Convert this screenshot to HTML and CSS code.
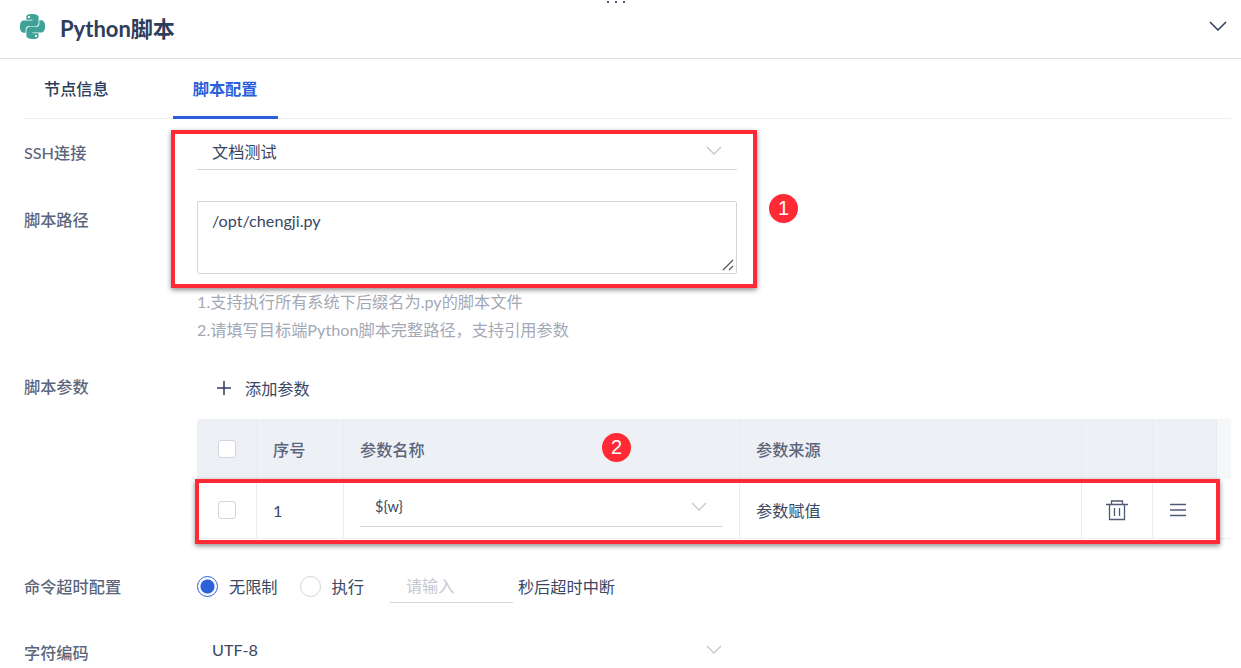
FILE: index.html
```html
<!DOCTYPE html>
<html lang="en">
<head>
    <meta charset="UTF-8">
    <title>Python脚本</title>
    <link rel="stylesheet" href="styles.css">
</head>
<body>
    <div class="panel">
        <div class="drag-dots"><span></span><span></span><span></span></div>
        <div class="header">
            <svg class="py-logo" viewBox="0 0 24 24" width="25" height="25">
                <path fill="#3fa296" fill-rule="evenodd" d="M14.25.18l.9.2.73.26.59.3.45.32.34.34.25.34.16.33.1.3.04.26.02.2-.01.13V8.5l-.05.63-.13.55-.21.46-.26.38-.3.31-.33.25-.35.19-.35.14-.33.1-.3.07-.26.04-.21.02H8.77l-.69.05-.59.14-.5.22-.41.27-.33.32-.27.35-.2.36-.15.37-.1.35-.07.32-.04.27-.02.21v3.06H3.17l-.21-.03-.28-.07-.32-.12-.35-.18-.36-.26-.36-.36-.35-.46-.32-.59-.28-.73-.21-.88-.14-1.05-.05-1.23.06-1.22.16-1.04.24-.87.32-.71.36-.57.4-.44.42-.33.42-.24.4-.16.36-.1.32-.05.24-.01h.16l.06.01h8.16v-.83H6.18l-.01-2.75-.02-.37.05-.34.11-.31.17-.28.25-.26.31-.23.38-.2.44-.18.51-.15.58-.12.64-.1.71-.06.77-.04.84-.02 1.27.05zm-6.3 1.98l-.23.33-.08.41.08.41.23.34.33.22.41.09.41-.09.33-.22.23-.34.08-.41-.08-.41-.23-.33-.33-.22-.41-.09-.41.09zm13.09 3.95l.28.06.32.12.35.18.36.27.36.35.35.47.32.59.28.73.21.88.14 1.04.05 1.23-.06 1.23-.16 1.04-.24.86-.32.71-.36.57-.4.45-.42.33-.42.24-.4.16-.36.09-.32.05-.24.02-.16-.01h-8.22v.82h5.84l.01 2.76.02.36-.05.34-.11.31-.17.29-.25.25-.31.24-.38.2-.44.17-.51.15-.58.13-.64.09-.71.07-.77.04-.84.01-1.27-.04-1.07-.14-.9-.2-.73-.25-.59-.3-.45-.33-.34-.34-.25-.34-.16-.33-.1-.3-.04-.25-.02-.2.01-.13v-5.34l.05-.64.13-.54.21-.46.26-.38.3-.32.33-.24.35-.2.35-.14.33-.1.3-.06.26-.04.21-.02.13-.01h5.84l.69-.05.59-.14.5-.21.41-.28.33-.32.27-.35.2-.36.15-.36.1-.35.07-.32.04-.28.02-.21V6.07h2.09l.14.01zm-6.47 14.25l-.23.33-.08.41.08.41.23.33.33.23.41.08.41-.08.33-.23.23-.33.08-.41-.08-.41-.23-.33-.33-.23-.41-.08-.41.08z"/>
            </svg>
            <span class="title">Python脚本</span>
            <svg class="collapse" viewBox="0 0 18 10" width="18" height="10"><path d="M1 1l8 8 8-8" fill="none" stroke="#2f3d5c" stroke-width="1.500"/></svg>
        </div>

        <div class="tabs">
            <div class="tab">节点信息</div>
            <div class="tab active">脚本配置</div>
        </div>

        <div class="form">
            <div class="row row-ssh">
                <label class="label">SSH连接</label>
                <div class="select"><span>文档测试</span><svg class="arrow" viewBox="0 0 16 9" width="16" height="9"><path d="M1 1l7 7 7-7"/></svg></div>
            </div>

            <div class="row row-path">
                <label class="label">脚本路径</label>
                <div class="control">
                    <div class="textarea">/opt/chengji.py
                        <svg class="grip" viewBox="0 0 12 12" width="12" height="12"><path d="M1 11L11 1M7 11l4-4" fill="none" stroke="#555" stroke-width="1.200"/></svg>
                    </div>
                    <p class="help first">1.支持执行所有系统下后缀名为.py的脚本文件</p>
                    <p class="help">2.请填写目标端Python脚本完整路径，支持引用参数</p>
                </div>
            </div>

            <div class="row row-params">
                <label class="label">脚本参数</label>
                <div class="add-param">
                    <svg viewBox="0 0 14 14" width="14" height="14"><path d="M7 0v14M0 7h14" stroke="#2f3d5c" stroke-width="1.500"/></svg>
                    <span>添加参数</span>
                </div>
            </div>

            <div class="table">
                <div class="tr thead">
                    <div class="td c-check"><span class="checkbox"></span></div>
                    <div class="td c-no">序号</div>
                    <div class="td c-name">参数名称</div>
                    <div class="td c-source">参数来源</div>
                    <div class="td c-del"></div>
                    <div class="td c-sort"></div>
                    <div class="td c-gutter"></div>
                </div>
                <div class="tr tbody">
                    <div class="td c-check"><span class="checkbox"></span></div>
                    <div class="td c-no">1</div>
                    <div class="td c-name">
                        <div class="select select-small"><span>${w}</span><svg class="arrow" viewBox="0 0 16 9" width="16" height="9"><path d="M1 1l7 7 7-7"/></svg></div>
                    </div>
                    <div class="td c-source">参数赋值</div>
                    <div class="td c-del">
                        <svg viewBox="0 0 22 22" width="22" height="22" fill="none" stroke="#4f5b76" stroke-width="1.300"><path d="M0 5.500h22M5.500 5.500V2h11v3.500M3.500 5.500v15h15v-15M8.500 9v8M13.500 9v8"/></svg>
                    </div>
                    <div class="td c-sort">
                        <svg viewBox="0 0 16 14" width="16" height="14"><path d="M0 1.500h16M0 7h16M0 12.500h16" stroke="#4f5b76" stroke-width="1.600"/></svg>
                    </div>
                    <div class="td c-gutter"></div>
                </div>
            </div>

            <div class="row row-timeout">
                <label class="label">命令超时配置</label>
                <div class="radios">
                    <span class="radio checked"></span><span class="radio-text">无限制</span>
                    <span class="radio"></span><span class="radio-text">执行</span>
                    <span class="small-input">请输入</span>
                    <span class="suffix">秒后超时中断</span>
                </div>
            </div>

            <div class="row row-charset">
                <label class="label">字符编码</label>
                <div class="select select-plain"><span>UTF-8</span><svg class="arrow" viewBox="0 0 16 9" width="16" height="9"><path d="M1 1l7 7 7-7"/></svg></div>
            </div>
        </div>

        <!-- annotations drawn on top of the screenshot -->
        <div class="mark mark-one"></div>
        <div class="mark mark-two"></div>
        <div class="badge badge-one">1</div>
        <div class="badge badge-two">2</div>
    </div>
</body>
</html>
```

FILE: styles.css
```css
html, body {
    margin: 0;
    height: 100%;
    overflow: hidden;
    background: #fff;
}
.panel {
    position: relative;
    width: 1241px;
    height: 668px;
    overflow: hidden;
    font-family: Lato, "Noto Sans CJK SC", sans-serif;
    font-size: 16.2px;
    color: #3a4763;
}
.drag-dots {
    position: absolute;
    top: 1px;
    left: 607px;
    display: flex;
    gap: 6px;
}
.drag-dots span {
    width: 2px;
    height: 2px;
    background: #4f5b76;
}
.header {
    display: flex;
    align-items: center;
    height: 58px;
    padding: 0 14px 0 20px;
    border-bottom: 1px solid #dcdde6;
}
.py-logo {
    margin-top: -6px;
}
.title {
    margin-left: 15px;
    margin-top: -5px;
    font-size: 22px;
    font-weight: 700;
    color: #2f3d5c;
}
.collapse {
    margin-left: auto;
    margin-top: -6px;
}
.tabs {
    display: flex;
    gap: 44px;
    height: 59px;
    margin: 0 10px 0 24px;
    border-bottom: 1px solid #eeeff3;
}
.tab {
    height: 59px;
    padding: 0 20px;
    line-height: 60px;
    font-weight: 500;
    color: #2f3d5c;
}
.tab.active {
    height: 57px;
    color: #2b5fdc;
    font-weight: 700;
    border-bottom: 3px solid #2b5fdc;
}
.form {
    padding: 16px 10px 0 24px;
}
.row {
    display: flex;
}
.label {
    width: 173px;
    flex: none;
    font-weight: 500;
    color: #5b667d;
}
.row-ssh .label {
    padding-top: 5px;
}
.select {
    display: flex;
    align-items: center;
    justify-content: space-between;
    box-sizing: border-box;
    width: 540px;
    height: 35px;
    padding: 0 15px 3px;
    border-bottom: 1px solid #d2d4de;
}
.arrow {
    fill: none;
    stroke: #c2c6d0;
    stroke-width: 1.300;
}
.row-path {
    margin-top: 31px;
}
.row-path .label {
    padding-top: 6px;
}
.textarea {
    position: relative;
    box-sizing: border-box;
    width: 540px;
    height: 73px;
    padding: 9px 14px;
    border: 1px solid #d2d4de;
    border-radius: 2px;
}
.grip {
    position: absolute;
    right: 2px;
    bottom: 2px;
}
.help {
    margin: 0;
    height: 28px;
    line-height: 28px;
    color: #a3a8b6;
}
.help.first {
    margin-top: 14px;
}
.row-params {
    margin-top: 22px;
}
.row-params .label {
    padding-top: 8px;
}
.add-param {
    display: flex;
    align-items: center;
    gap: 14px;
    height: 44px;
    padding-left: 20px;
}
.table {
    margin: 9px 0 0 173px;
}
.tr {
    display: flex;
    height: 60px;
}
.thead {
    background: #edf0f5;
    color: #5b667d;
    font-weight: 500;
    border-radius: 3px 3px 0 0;
}
.td {
    display: flex;
    align-items: center;
    box-sizing: border-box;
    flex: none;
    border-right: 1px solid #e9ebef;
}
.thead .td {
    border-right-color: #e8ebf1;
}
.c-check { width: 60px; justify-content: center; }
.c-no { width: 87px; padding-left: 16px; }
.c-name { width: 396px; padding-left: 16px; }
.c-source { width: 342px; padding-left: 16px; }
.c-del { width: 71px; justify-content: center; }
.c-sort { width: 64px; padding-left: 17px; }
.c-gutter { width: 14px; border-right: 0; background: #f6f7f9; }
.tbody .c-gutter { background: #fff; }
.tbody .td {
    padding-top: 3px;
    border-bottom: 1px solid #eeeff3;
}
.checkbox {
    box-sizing: border-box;
    width: 18px;
    height: 18px;
    background: #fff;
    border: 1px solid #d2d4de;
    border-radius: 3px;
}
.select-small {
    width: 362px;
    height: 37px;
    margin-top: -3px;
    font-size: 14.500px;
}
.row-timeout {
    align-items: center;
    margin-top: 24px;
    height: 46px;
}
.radios {
    display: flex;
    align-items: center;
    height: 46px;
}
.radio {
    box-sizing: border-box;
    width: 21px;
    height: 21px;
    border: 1px solid #d2d4de;
    border-radius: 50%;
    background: #fff;
}
.radio.checked {
    border-color: #2b5fdc;
    background: radial-gradient(circle, #2b5fdc 0, #2b5fdc 6.500px, #fff 7.500px);
}
.radio-text {
    margin: 0 22px 0 11px;
}
.small-input {
    box-sizing: border-box;
    width: 123px;
    height: 34px;
    margin-left: 4px;
    padding-left: 16px;
    line-height: 34px;
    border-bottom: 1px solid #d2d4de;
    color: #c5c8d2;
}
.suffix {
    margin-left: 5px;
}
.row-charset {
    margin-top: 24px;
}
.row-charset .label {
    padding-top: 7px;
}
.select-plain {
    border-bottom: 0;
}
.mark {
    position: absolute;
    box-sizing: border-box;
    border: 4px solid #ff2a35;
    box-shadow: 0 2px 5px rgba(0, 0, 0, 0.45);
}
.mark-one {
    left: 171px;
    top: 130px;
    width: 586px;
    height: 158px;
}
.mark-two {
    left: 195px;
    top: 479px;
    width: 1025px;
    height: 65px;
}
.badge {
    position: absolute;
    width: 29px;
    height: 29px;
    border-radius: 50%;
    background: #ff2a35;
    color: #fff;
    font-family: "Liberation Sans", sans-serif;
    font-size: 20px;
    line-height: 29px;
    text-align: center;
}
.badge-one { left: 769px; top: 194px; }
.badge-two { left: 602px; top: 433px; }
```
